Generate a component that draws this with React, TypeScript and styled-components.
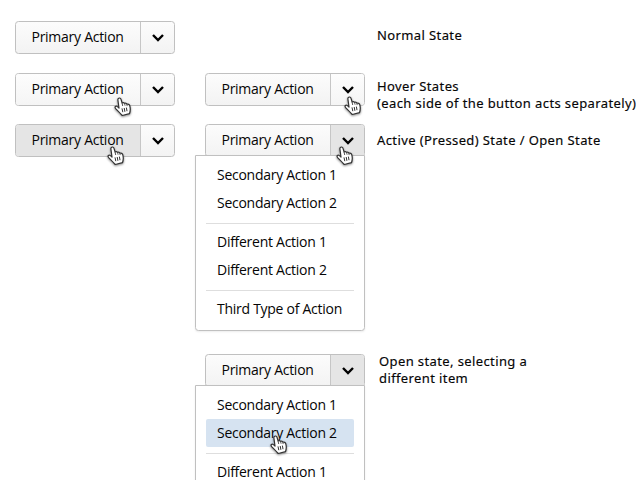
import React from "react";
import styled, { createGlobalStyle, css } from "styled-components";

const GlobalStyle = createGlobalStyle`
  * { box-sizing: border-box; }
  html, body { margin: 0; background: #fff; overflow: hidden; }
`;

const Page = styled.main`
  width: 640px;
  height: 480px;
  overflow: hidden;
  padding: 21px 0 0 15px;
  background: #fff;
  color: #050505;
  font: 14px/20px "Open Sans", "Noto Sans", sans-serif;
  letter-spacing: -0.27px;
`;

const Row = styled.section<{ $height: number }>`
  display: grid;
  grid-template-columns: 190px 172px 1fr;
  align-items: start;
  height: ${(p) => p.$height}px;
`;

const Cell = styled.div`
  position: relative;
  min-width: 0;
`;

const Split = styled.div`
  display: flex;
  width: 160px;
  height: 33px;
  border: 1px solid #c0c0c0;
  border-radius: 3.5px;
  background: linear-gradient(#fcfcfc, #f3f3f3);
  overflow: hidden;
`;

const pressed = css`
  background: #e5e5e5;
`;
const hovered = css`
  background: linear-gradient(#fdfdfd, #f5f5f5);
`;

type State = "normal" | "hover" | "pressed";

const Primary = styled.button<{ $state: State }>`
  width: 124px;
  padding: 0 0 1px 15.5px;
  border: 0;
  background: transparent;
  color: inherit;
  font: inherit;
  letter-spacing: inherit;
  text-align: left;
  white-space: nowrap;
  ${(p) => p.$state === "pressed" && pressed}
  ${(p) => p.$state === "hover" && hovered}
`;

const Toggle = styled.button<{ $state: State }>`
  display: flex;
  align-items: center;
  justify-content: center;
  flex: 1;
  padding: 0;
  border: 0;
  border-left: 1px solid #c6c6c6;
  background: transparent;
  color: #000;
  ${(p) => p.$state === "pressed" && pressed}
  ${(p) => p.$state === "hover" && hovered}
`;

const Menu = styled.div`
  position: absolute;
  z-index: 1;
  top: 31px;
  left: -10px;
  width: 170px;
  height: 176px;
  padding: 5px 10px;
  border: 1px solid #c0c0c0;
  border-radius: 0 0 3.5px 3.5px;
  background: #fff;
  box-shadow: 0 1px 2px rgba(0, 0, 0, 0.08);
`;

const Item = styled.div<{ $selected?: boolean }>`
  height: 28px;
  padding: 0 0 0 11px;
  border-radius: 2px;
  line-height: 27px;
  white-space: nowrap;
  background: ${(p) => (p.$selected ? "#d6e3f1" : "transparent")};
`;

const Divider = styled.div`
  height: 1px;
  margin: 6px 0 4px;
  background: #dedede;
`;

const Caption = styled.p<{ $top: number; $indent?: number; $tracking?: number }>`
  margin: ${(p) => p.$top}px 0 0 ${(p) => p.$indent ?? 0}px;
  font: 400 13px/17px "Noto Sans", sans-serif;
  letter-spacing: ${(p) => p.$tracking ?? 0.39}px;
  -webkit-text-stroke: 0.15px #050505;
  white-space: nowrap;
`;

const Hand = styled.svg<{ $x: number; $y: number }>`
  position: absolute;
  z-index: 2;
  left: ${(p) => p.$x}px;
  top: ${(p) => p.$y}px;
  filter: drop-shadow(0 1px 0.8px rgba(0, 0, 0, 0.45));
`;

const Pointer = ({ x, y }: { x: number; y: number }) => (
  <Hand $x={x} $y={y} width="18" height="20" viewBox="0 0 18 20">
    <path
      d="M5 11 3.9 3.2C3.5.7 6.5.2 7.1 2.5l1 3.5c.7-.7 2-.6 2.5.5.9-.6 2-.2 2.3.8 1.3-.5 2.5.2 2.9 1.5.8 2.9.8 4.9-.3 7.9L8.3 18.5C6.4 16.4 4 14 1.6 11.6.2 9.8 1.9 8.4 3.4 9.6Z"
      fill="#fff"
      stroke="#333"
      strokeWidth="1.2"
      strokeLinejoin="round"
    />
    <path d="M8 11.4l.8 3.8M10.2 11l.7 3.8M12.4 10.6l.6 3.6" stroke="#333" fill="none" />
    <path d="m8.1 6 .6 3M10.6 6.6l.5 2.1M12.9 7.5l.3 1.6" stroke="#555" fill="none" />
  </Hand>
);

const SplitButton = ({ primary = "normal", toggle = "normal" }: { primary?: State; toggle?: State }) => (
  <Split>
    <Primary $state={primary}>Primary Action</Primary>
    <Toggle $state={toggle} aria-label="More actions">
      <svg width="14" height="10" viewBox="0 0 14 10">
        <path d="m2 2 5 5 5-5" fill="none" stroke="currentColor" strokeWidth="2.4" />
      </svg>
    </Toggle>
  </Split>
);

const ActionMenu = ({ selected }: { selected?: number }) => (
  <Menu>
    <Item>Secondary Action 1</Item>
    <Item $selected={selected === 2}>Secondary Action 2</Item>
    <Divider />
    <Item>Different Action 1</Item>
    <Item>Different Action 2</Item>
    <Divider />
    <Item>Third Type of Action</Item>
  </Menu>
);

export default function App() {
  return (
    <>
      <GlobalStyle />
      <Page>
        <Row $height={52}>
          <Cell><SplitButton /></Cell>
          <Cell />
          <Caption $top={6}>Normal State</Caption>
        </Row>
        <Row $height={51}>
          <Cell><SplitButton primary="hover" /><Pointer x={99} y={24} /></Cell>
          <Cell><SplitButton toggle="hover" /><Pointer x={139} y={23} /></Cell>
          <Caption $top={5}>Hover States<br />(each side of the button acts separately)</Caption>
        </Row>
        <Row $height={230}>
          <Cell><SplitButton primary="pressed" /><Pointer x={92} y={22} /></Cell>
          <Cell><SplitButton toggle="pressed" /><ActionMenu /><Pointer x={131} y={22} /></Cell>
          <Caption $top={8}>Active (Pressed) State / Open State</Caption>
        </Row>
        <Row $height={126}>
          <Cell />
          <Cell><SplitButton toggle="pressed" /><ActionMenu selected={2} /><Pointer x={65} y={81} /></Cell>
          <Caption $top={-1} $indent={2}>Open state, selecting a<br />different item</Caption>
        </Row>
      </Page>
    </>
  );
}
